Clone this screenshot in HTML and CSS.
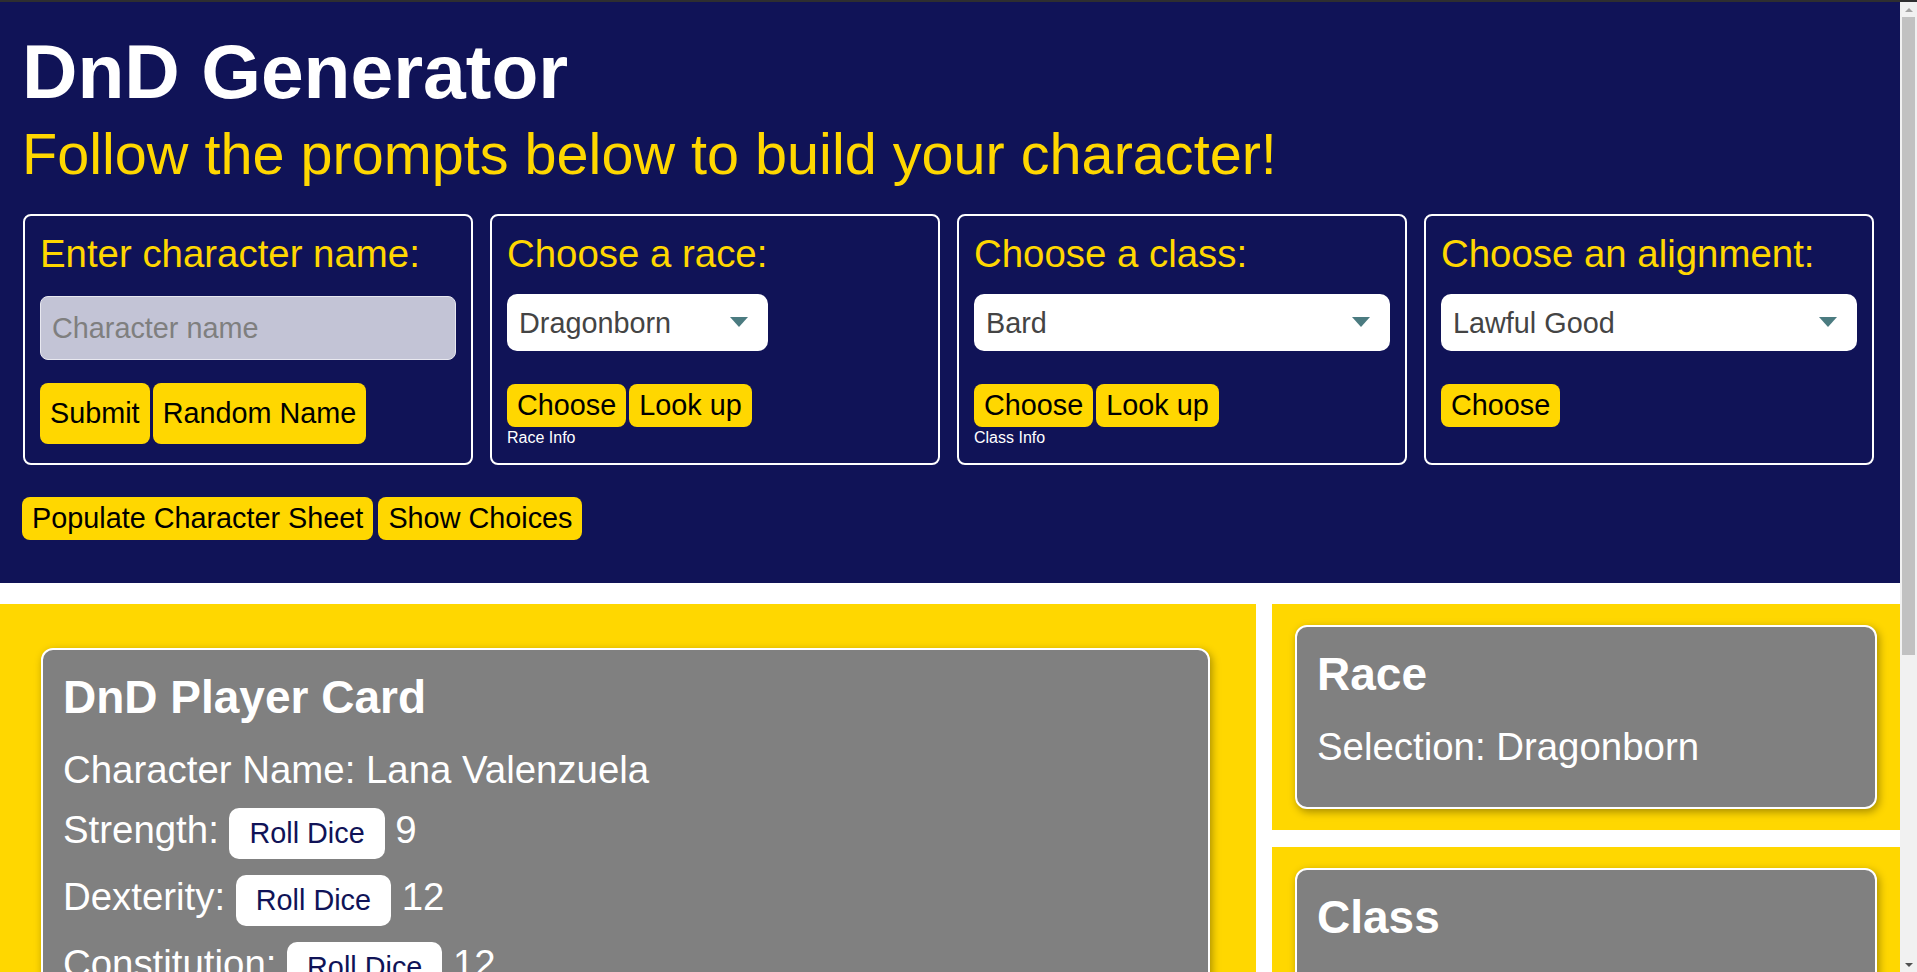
FILE: index.html
```html
<!DOCTYPE html>
<html lang="en">
<head>
<meta charset="utf-8">
<title>DnD Generator</title>
<link rel="stylesheet" href="styles.css">
</head>
<body>
<div class="page">
<header class="hero">
  <h1 class="title">DnD Generator</h1>
  <h2 class="subtitle">Follow the prompts below to build your character!</h2>

  <div class="choices">
    <section class="choice">
      <label class="choice-label" for="name">Enter character name:</label>
      <input id="name" class="name-input" type="text" placeholder="Character name">
      <div class="btn-row btn-row-name">
        <button class="btn btn-tall">Submit</button>
        <button class="btn btn-tall">Random Name</button>
      </div>
    </section>

    <section class="choice">
      <label class="choice-label" for="race">Choose a race:</label>
      <div class="select-wrap select-wrap-short">
        <select id="race" class="select">
          <option>Dragonborn</option>
        </select>
      </div>
      <div class="btn-row">
        <button class="btn">Choose</button>
        <button class="btn">Look up</button>
      </div>
      <p class="info">Race Info</p>
    </section>

    <section class="choice">
      <label class="choice-label" for="class">Choose a class:</label>
      <div class="select-wrap">
        <select id="class" class="select">
          <option>Bard</option>
        </select>
      </div>
      <div class="btn-row">
        <button class="btn">Choose</button>
        <button class="btn">Look up</button>
      </div>
      <p class="info">Class Info</p>
    </section>

    <section class="choice">
      <label class="choice-label" for="align">Choose an alignment:</label>
      <div class="select-wrap">
        <select id="align" class="select">
          <option>Lawful Good</option>
        </select>
      </div>
      <div class="btn-row">
        <button class="btn">Choose</button>
      </div>
    </section>
  </div>

  <div class="btn-row btn-row-main">
    <button class="btn">Populate Character Sheet</button>
    <button class="btn">Show Choices</button>
  </div>
</header>

<main class="sheet">
  <section class="panel panel-main">
    <div class="card">
      <h2 class="card-title">DnD Player Card</h2>
      <p class="row">Character Name: Lana Valenzuela</p>
      <p class="row">Strength: <button class="roll">Roll Dice</button> 9</p>
      <p class="row">Dexterity: <button class="roll">Roll Dice</button> 12</p>
      <p class="row">Constitution: <button class="roll">Roll Dice</button> 12</p>
      <p class="row">Intelligence: <button class="roll">Roll Dice</button> 14</p>
      <p class="row">Wisdom: <button class="roll">Roll Dice</button> 10</p>
      <p class="row">Charisma: <button class="roll">Roll Dice</button> 15</p>
      <p class="row">Race: Dragonborn</p>
      <p class="row">Class: Bard</p>
    </div>
  </section>

  <aside class="side">
    <section class="panel panel-side">
      <div class="card">
        <h2 class="card-title">Race</h2>
        <p class="row">Selection: Dragonborn</p>
      </div>
    </section>
    <section class="panel panel-side">
      <div class="card">
        <h2 class="card-title">Class</h2>
        <p class="row">Selection: Bard</p>
      </div>
    </section>
    <section class="panel panel-side">
      <div class="card">
        <h2 class="card-title">Alignment</h2>
        <p class="row">Selection: Lawful Good</p>
      </div>
    </section>
  </aside>
</main>
</div>

<div class="scrollbar" aria-hidden="true">
  <div class="sb-btn"><span class="sb-arrow sb-arrow-up"></span></div>
  <div class="sb-track">
    <div class="sb-thumb"></div>
  </div>
  <div class="sb-btn"><span class="sb-arrow sb-arrow-down"></span></div>
</div>
</body>
</html>
```

FILE: styles.css
```css
* {
  box-sizing: border-box;
}

body {
  margin: 0;
  background: #ffffff;
  font-family: "Liberation Sans", Arial, sans-serif;
  color: #ffffff;
  display: flex;
  align-items: flex-start;
}

.page {
  flex: 1 1 auto;
  min-width: 0;
}

/* ---------- window scrollbar ---------- */
.scrollbar {
  flex: 0 0 17px;
  position: sticky;
  top: 0;
  height: 100vh;
  background: #f1f1f1;
  border-top: 2px solid #2e2e30;
  display: flex;
  flex-direction: column;
}

.sb-btn {
  flex: 0 0 15px;
  display: flex;
  align-items: center;
  justify-content: center;
}

.sb-arrow {
  width: 0;
  height: 0;
  border-left: 4px solid transparent;
  border-right: 4px solid transparent;
}

.sb-arrow-up {
  border-bottom: 4px solid #a3a3a3;
}

.sb-arrow-down {
  border-top: 4px solid #505050;
}

.sb-track {
  flex: 1 1 auto;
  padding: 0 2px;
}

.sb-thumb {
  height: 638px;
  background: #c1c1c1;
}

/* ---------- header ---------- */
.hero {
  background: #101357;
  border-top: 2px solid #2e2e30;
  padding: 25px 20px 43px 22px;
}

.title {
  margin: 0;
  font-size: 76.8px;
  font-weight: bold;
  color: #ffffff;
  line-height: normal;
}

.subtitle {
  margin: 5px 0 0 0;
  font-size: 57.6px;
  font-weight: normal;
  color: #ffd700;
  line-height: normal;
}

.choices {
  display: flex;
  gap: 17px;
  margin: 27px 6px 0 1px;
}

.choice {
  flex: 1 1 0;
  border: 2px solid #ffffff;
  border-radius: 8px;
  padding: 16px 15px 16px 15px;
  display: flex;
  flex-direction: column;
  align-items: flex-start;
}

.choice-label {
  display: block;
  font-size: 38.4px;
  line-height: normal;
  color: #ffd700;
}

.name-input {
  width: 100%;
  height: 64px;
  margin-top: 20px;
  padding: 0 11px;
  font-family: inherit;
  font-size: 28.8px;
  background: #c3c4d6;
  border: 1px solid #e8e8f0;
  border-radius: 8px;
  color: #333333;
}

.name-input::placeholder {
  color: #7f7f7f;
}

.select-wrap {
  position: relative;
  width: 100%;
  margin-top: 18px;
}

.select-wrap-short {
  width: 261px;
}

.select-wrap::after {
  content: "";
  position: absolute;
  right: 20px;
  top: 23px;
  border-left: 9.5px solid transparent;
  border-right: 9.5px solid transparent;
  border-top: 10px solid #4b7b80;
  pointer-events: none;
}

.select {
  appearance: none;
  -webkit-appearance: none;
  display: block;
  width: 100%;
  height: 57px;
  padding: 0 40px 0 12px;
  font-family: inherit;
  font-size: 28.8px;
  color: #444444;
  background: #ffffff;
  border: 0;
  border-radius: 10px;
}

.btn-row {
  display: flex;
  gap: 3px;
  margin-top: 33px;
}

.btn-row-name {
  margin-top: 23px;
}

.btn-row-main {
  margin: 32px 0 0 0;
  gap: 5px;
}

.btn {
  font-family: inherit;
  font-size: 28.8px;
  line-height: normal;
  color: #000000;
  background: #ffd700;
  border: 0;
  border-radius: 8px;
  padding: 5px 10px;
}

.btn-tall {
  padding: 14px 10px;
}

.info {
  margin: 2px 0 0 0;
  font-size: 16px;
  line-height: normal;
  color: #ffffff;
}

/* ---------- character sheet ---------- */
.sheet {
  display: grid;
  grid-template-columns: 2fr 1fr;
  gap: 16px;
  margin-top: 21px;
  align-items: start;
}

.panel {
  background: #ffd700;
}

.panel-main {
  padding: 44px 46px 44px 41px;
}

.panel-side {
  padding: 21px 23px 21px 23px;
}

.side {
  display: flex;
  flex-direction: column;
  gap: 17px;
}

.card {
  background: #808080;
  border: 2.5px solid #ffffff;
  border-radius: 12px;
  padding: 20px 20px 22px 20px;
  box-shadow: 2px 3px 8px rgba(0, 0, 0, 0.35);
}

.card-title {
  margin: 0 0 24px 0;
  font-size: 46px;
  font-weight: bold;
  line-height: normal;
  color: #ffffff;
}

.row {
  margin: 16px 0;
  font-size: 38.4px;
  line-height: normal;
  color: #ffffff;
}

.card-title + .row {
  margin-top: 0;
}

.roll {
  font-family: inherit;
  font-size: 28.8px;
  line-height: normal;
  color: #101357;
  background: #ffffff;
  border: 0;
  border-radius: 10px;
  padding: 9px 20px;
  vertical-align: baseline;
}
```
